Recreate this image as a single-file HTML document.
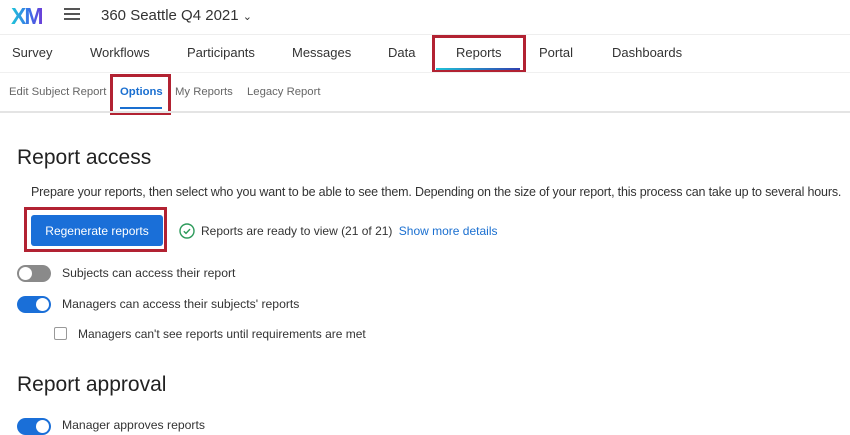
<!DOCTYPE html>
<html><head><style>
*{margin:0;padding:0;box-sizing:border-box}
body{width:850px;height:425px;overflow:hidden;background:#fff;font-family:"Liberation Sans",Arial,sans-serif;color:#333;position:relative}
.a{position:absolute;white-space:nowrap}
.tog{position:absolute;width:34px;height:17px;border-radius:9px}
.tog i{position:absolute;top:2px;width:13px;height:13px;border-radius:50%;background:#fff}
</style></head><body>
<div class="a" style="left:11px;top:3px;font-size:23px;font-weight:bold;letter-spacing:-2px;background:linear-gradient(90deg,#1fc8d8,#3a6ee8 60%,#6b3fd8);-webkit-background-clip:text;color:transparent">XM</div>
<div class="a" style="left:64px;top:8px;width:16px;height:2px;background:#555;box-shadow:0 5px 0 #555,0 10px 0 #555"></div>
<div class="a" style="left:101px;top:7px;font-size:15px;color:#333">360 Seattle Q4 2021 <span style="font-size:11px">&#8964;</span></div>
<div class="a" style="left:0;top:34px;width:850px;height:1px;background:#eee"></div>
<div class="a" style="left:12px;top:45px;font-size:13px">Survey</div>
<div class="a" style="left:90px;top:45px;font-size:13px">Workflows</div>
<div class="a" style="left:187px;top:45px;font-size:13px">Participants</div>
<div class="a" style="left:292px;top:45px;font-size:13px">Messages</div>
<div class="a" style="left:388px;top:45px;font-size:13px">Data</div>
<div class="a" style="left:456px;top:45px;font-size:13px">Reports</div>
<div class="a" style="left:539px;top:45px;font-size:13px">Portal</div>
<div class="a" style="left:612px;top:45px;font-size:13px">Dashboards</div>
<div class="a" style="left:436px;top:68px;width:84px;height:2px;background:linear-gradient(90deg,#20c4d8,#3040b0)"></div>
<div class="a" style="left:432px;top:35px;width:94px;height:38px;border:3px solid #b22232"></div>
<div class="a" style="left:0;top:72px;width:850px;height:1px;background:#f0f0f0"></div>
<div class="a" style="left:9px;top:86px;font-size:11.3px;color:#666">Edit Subject Report</div>
<div class="a" style="left:120px;top:86px;font-size:11.3px;color:#1a6fd0;font-weight:bold">Options</div>
<div class="a" style="left:120px;top:107px;width:42px;height:2px;background:#1a6fd0"></div>
<div class="a" style="left:175px;top:86px;font-size:11.3px;color:#666">My Reports</div>
<div class="a" style="left:247px;top:86px;font-size:11.3px;color:#666">Legacy Report</div>
<div class="a" style="left:110px;top:74px;width:61px;height:41px;border:3px solid #b22232"></div>
<div class="a" style="left:0;top:111px;width:850px;height:2px;background:#e4e4e4"></div>
<div class="a" style="left:17px;top:146px;font-size:21px;color:#222">Report access</div>
<div class="a" style="left:31px;top:185px;font-size:12.5px;color:#333;letter-spacing:-0.17px">Prepare your reports, then select who you want to be able to see them. Depending on the size of your report, this process can take up to several hours.</div>
<div class="a" style="left:24px;top:207px;width:143px;height:45px;border:3px solid #b22232"></div>
<div class="a" style="left:31px;top:215px;width:132px;height:31px;background:#1a6fd8;border-radius:3px;color:#fff;font-size:12px;text-align:center;line-height:33px">Regenerate reports</div>
<svg class="a" style="left:179px;top:223px" width="16" height="16" viewBox="0 0 16 16"><circle cx="8" cy="8" r="7" fill="none" stroke="#2c9a5a" stroke-width="1.4"/><path d="M4.8 8.2l2.2 2.2 4-4.3" fill="none" stroke="#2c9a5a" stroke-width="1.4"/></svg>
<div class="a" style="left:201px;top:224px;font-size:12px">Reports are ready to view (21 of 21) <span style="color:#1a6fd0;margin-left:3px">Show more details</span></div>
<div class="tog" style="left:17px;top:265px;background:#8a8a8a"><i style="left:2px"></i></div>
<div class="a" style="left:62px;top:266px;font-size:12.2px">Subjects can access their report</div>
<div class="tog" style="left:17px;top:296px;background:#1a6fd8"><i style="left:19px"></i></div>
<div class="a" style="left:62px;top:297px;font-size:12.2px">Managers can access their subjects' reports</div>
<div class="a" style="left:54px;top:327px;width:13px;height:13px;border:1px solid #999;border-radius:2px"></div>
<div class="a" style="left:78px;top:327px;font-size:12px">Managers can't see reports until requirements are met</div>
<div class="a" style="left:17px;top:373px;font-size:21px;color:#222">Report approval</div>
<div class="tog" style="left:17px;top:418px;background:#1a6fd8"><i style="left:19px"></i></div>
<div class="a" style="left:62px;top:418px;font-size:12.2px">Manager approves reports</div>
</body></html>
